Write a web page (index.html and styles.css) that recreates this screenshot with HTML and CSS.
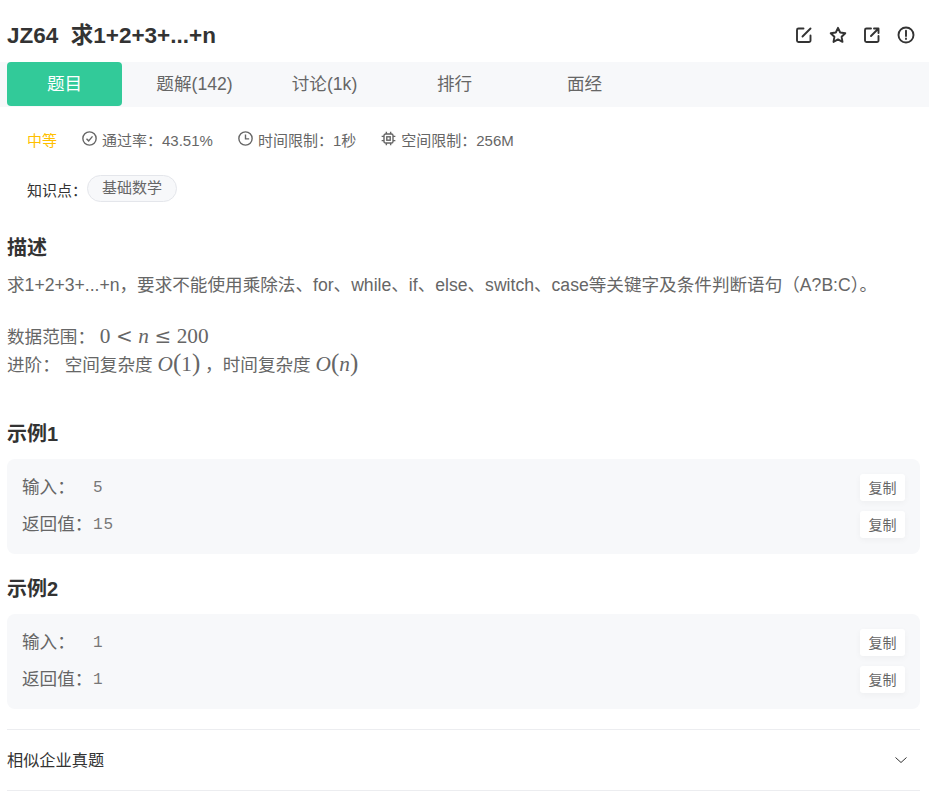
FILE: index.html
```
<!DOCTYPE html>
<html lang="zh">
<head>
<meta charset="utf-8">
<title>JZ64 求1+2+3+...+n</title>
<link rel="stylesheet" href="styles.css">
</head>
<body>
<header class="head">
  <h1 class="title">JZ64&nbsp; 求1+2+3+...+n</h1>
  <div class="actions">
    <svg class="act" viewBox="0 0 18 18"><path d="M8.500 2.500H3.500a1.500 1.500 0 0 0-1.500 1.500v10.500a1.500 1.500 0 0 0 1.500 1.500h10.500a1.500 1.500 0 0 0 1.500-1.500V9.500M7.500 10.500 15.500 2.500"/></svg>
    <svg class="act" viewBox="0 0 18 18"><path d="M9 1.800 11.200 6.500 16.300 7.200 12.600 10.800 13.500 15.900 9 13.400 4.500 15.900 5.400 10.800 1.700 7.200 6.800 6.500Z"/></svg>
    <svg class="act" viewBox="0 0 18 18"><path d="M8 2.500H3.500a1.500 1.500 0 0 0-1.500 1.500v10.500a1.500 1.500 0 0 0 1.500 1.500h10.500a1.500 1.500 0 0 0 1.500-1.500V10M8 10 15.500 2.500M11 2.500h4.500V7"/></svg>
    <svg class="act" viewBox="0 0 18 18"><circle cx="9" cy="9" r="7.500"/><path d="M9 4.800v5.200M9 12.500v.6"/></svg>
  </div>
</header>
<nav class="tabs">
  <a class="tab tab-on">题目</a>
  <a class="tab">题解(142)</a>
  <a class="tab">讨论(1k)</a>
  <a class="tab">排行</a>
  <a class="tab">面经</a>
</nav>
<div class="meta">
  <span class="level">中等</span>
  <span class="stat"><svg class="ico" viewBox="0 0 14 14"><circle cx="7" cy="7" r="6.200"/><path d="M4.200 7.200 6.200 9.200 9.800 5"/></svg>通过率：43.51%</span>
  <span class="stat"><svg class="ico" viewBox="0 0 14 14"><circle cx="7" cy="7" r="6.200"/><path d="M7 3.200V7.300H10.400"/></svg>时间限制：1秒</span>
  <span class="stat"><svg class="ico" viewBox="0 0 14 14"><rect x="2.800" y="2.800" width="8.400" height="8.400" rx="1.500"/><rect x="5.400" y="5.400" width="3.200" height="3.200"/><path d="M5 .6v2.200M9 .6v2.200M5 11.200v2.200M9 11.200v2.200M.6 5h2.200M.6 9h2.200M11.200 5h2.200M11.200 9h2.200"/></svg>空间限制：256M</span>
</div>
<div class="topics">
  <span class="topics-label">知识点：</span>
  <span class="chip">基础数学</span>
</div>
<section class="desc">
  <h2 class="sec">描述</h2>
  <p class="line">求1+2+3+...+n，要求不能使用乘除法、for、while、if、else、switch、case等关键字及条件判断语句（A?B:C）。</p>
  <p class="line line-first">数据范围： <span class="math">0<span class="rel">&lt;</span><i>n</i><span class="rel">≤</span>200</span></p>
  <p class="line">进阶： 空间复杂度 <span class="math"><i>O</i><span class="par">(</span>1<span class="par">)</span></span> ，时间复杂度 <span class="math"><i>O</i><span class="par">(</span><i>n</i><span class="par">)</span></span></p>
</section>
<section class="example example-first">
  <h2 class="sec">示例1</h2>
  <div class="box">
    <div class="row"><span class="key">输入：</span><code class="val">5</code><button class="copy">复制</button></div>
    <div class="row"><span class="key">返回值：</span><code class="val">15</code><button class="copy">复制</button></div>
  </div>
</section>
<section class="example">
  <h2 class="sec">示例2</h2>
  <div class="box">
    <div class="row"><span class="key">输入：</span><code class="val">1</code><button class="copy">复制</button></div>
    <div class="row"><span class="key">返回值：</span><code class="val">1</code><button class="copy">复制</button></div>
  </div>
</section>
<div class="similar">
  <span class="similar-label">相似企业真题</span>
  <svg class="chev" viewBox="0 0 12 6"><path d="M.5 .5 6 5.500 11.500 .5"/></svg>
</div>
</body>
</html>
```

FILE: styles.css
```
* { box-sizing: border-box; }
html, body { margin: 0; padding: 0; background: #fff; }
body {
  height: 811px;
  overflow: hidden;
  font-family: "Liberation Sans", "Noto Sans CJK SC", sans-serif;
  color: #333;
  font-size: 14px;
}
.head {
  height: 62px;
  padding: 10px 14px 0 7px;
  display: flex;
  align-items: center;
  justify-content: space-between;
}
.title { margin: 0; font-size: 22.5px; font-weight: 700; color: #333; line-height: 30px; }
.actions { display: flex; gap: 16px; margin-top: -3px; }
.act { width: 18px; height: 18px; fill: none; stroke: #333; stroke-width: 1.9; stroke-linecap: round; stroke-linejoin: round; }
.tabs {
  height: 45px;
  background: #f7f8fa;
  padding-left: 7px;
  display: flex;
  gap: 15px;
}
.tab {
  width: 115px;
  height: 44px;
  line-height: 44px;
  text-align: center;
  font-size: 17.6px;
  color: #666;
  border-radius: 4px;
}
.tab-on { background: #32ca99; color: #fff; }
.meta {
  height: 33px;
  margin-top: 16px;
  padding-left: 27px;
  display: flex;
  align-items: center;
  gap: 25px;
  font-size: 15px;
  color: #666;
}
.level { color: #ffbf00; }
.stat { display: flex; align-items: center; }
.ico { width: 15px; height: 15px; margin-right: 5px; margin-top: -3px; fill: none; stroke: #666; stroke-width: 1.300; }
.topics { display: flex; align-items: center; padding-left: 27px; margin-top: 18px; height: 28px; }
.topics-label { font-size: 15px; color: #333; margin-top: 3px; }
.chip {
  height: 27px;
  line-height: 24px;
  padding: 0 14px;
  font-size: 15px;
  color: #666;
  background: #f7f8fa;
  border: 1px solid #e4e6eb;
  border-radius: 14px;
}
.desc { padding: 0 9px 0 7px; margin-top: 32px; }
.sec { margin: 0; font-size: 20px; font-weight: 700; line-height: 28px; color: #333; }
.line { margin: 0; font-size: 17.6px; line-height: 28px; color: #666; }
.desc .sec + .line { margin-top: 9px; }
.line-first { margin-top: 24px; }
.math { font-family: "Liberation Serif", serif; font-size: 21.3px; line-height: 0; color: #666; }
.rel { font-family: "DejaVu Serif", serif; font-size: 20px; margin: 0 5.500px; }
.par { font-size: 25px; line-height: 0; }
.example { padding: 0 9px 0 7px; }
.example-first { margin-top: 41px; }
.example + .example { margin-top: 21px; }
.box {
  margin-top: 11px;
  height: 95px;
  background: #f7f8fa;
  border-radius: 8px;
  padding: 10px 15px 0;
}
.row { height: 37px; display: flex; align-items: center; color: #666; font-size: 17.6px; }
.key { width: 71px; flex: none; white-space: nowrap; margin-top: -5px; }
.val { font-family: "Liberation Mono", monospace; font-size: 16px; color: #777; letter-spacing: 1px; flex: 1; margin-top: 1px; }
.copy {
  width: 45px;
  height: 27px;
  padding: 0 0 2px;
  border: 0;
  border-radius: 3px;
  background: #fff;
  font: 14px "Liberation Sans", "Noto Sans CJK SC", sans-serif;
  color: #666;
  box-shadow: 0 2px 6px rgba(0, 0, 0, .04);
}
.similar {
  margin: 20px 9px 0 7px;
  height: 62px;
  border-top: 1px solid #ecedf0;
  border-bottom: 1px solid #ecedf0;
  display: flex;
  align-items: center;
  justify-content: space-between;
  font-size: 16.200px;
  color: #333;
}
.similar-label { margin-top: -2px; }
.chev { width: 12px; height: 6px; margin-right: 13px; fill: none; stroke: #333; stroke-width: 1; }
```
